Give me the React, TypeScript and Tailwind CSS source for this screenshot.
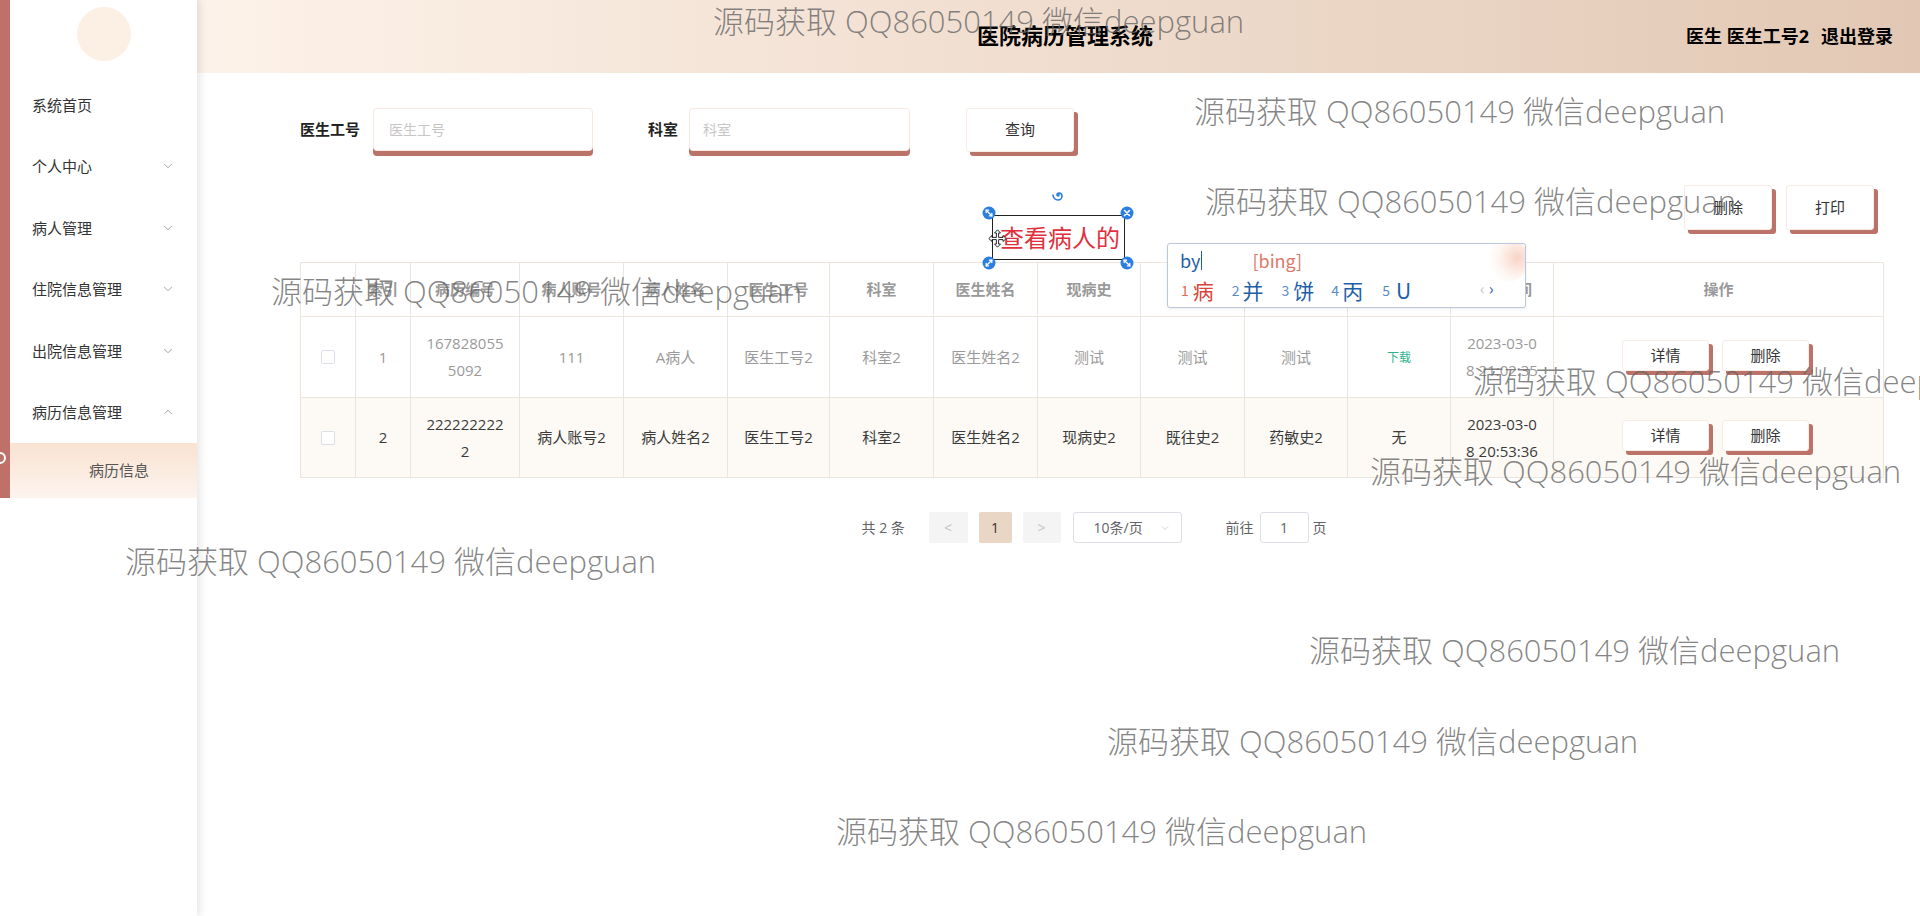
import { ChevronDown, ChevronUp } from 'lucide-react';

const menus = [
  { label: '系统首页', arrow: null },
  { label: '个人中心', arrow: 'down' },
  { label: '病人管理', arrow: 'down' },
  { label: '住院信息管理', arrow: 'down' },
  { label: '出院信息管理', arrow: 'down' },
  { label: '病历信息管理', arrow: 'up' },
];

const cols = [
  '',
  '索引',
  '病历编号',
  '病人账号',
  '病人姓名',
  '医生工号',
  '科室',
  '医生姓名',
  '现病史',
  '既往史',
  '药敏史',
  '病历文件',
  '创建时间',
  '操作',
];

const rows = [
  {
    idx: '1',
    no: ['167828055', '5092'],
    account: '111',
    name: 'A病人',
    doctorNo: '医生工号2',
    dept: '科室2',
    doctorName: '医生姓名2',
    now: '测试',
    past: '测试',
    allergy: '测试',
    file: 'download',
    time: ['2023-03-0', '8 21:02:35'],
    dim: true,
  },
  {
    idx: '2',
    no: ['222222222', '2'],
    account: '病人账号2',
    name: '病人姓名2',
    doctorNo: '医生工号2',
    dept: '科室2',
    doctorName: '医生姓名2',
    now: '现病史2',
    past: '既往史2',
    allergy: '药敏史2',
    file: '无',
    time: ['2023-03-0', '8 20:53:36'],
    dim: false,
  },
];

// watermark spots, read off the screenshot
const watermarks = [
  { left: 'left-[713px]', top: 'top-[5px]' },
  { left: 'left-[1194px]', top: 'top-[95px]' },
  { left: 'left-[1205px]', top: 'top-[185px]' },
  { left: 'left-[271px]', top: 'top-[275px]' },
  { left: 'left-[1473px]', top: 'top-[365px]' },
  { left: 'left-[1370px]', top: 'top-[455px]' },
  { left: 'left-[125px]', top: 'top-[545px]' },
  { left: 'left-[1309px]', top: 'top-[634px]' },
  { left: 'left-[1107px]', top: 'top-[725px]' },
  { left: 'left-[836px]', top: 'top-[815px]' },
];

function ShadowButton({ children, size }: { children: React.ReactNode; size: 'lg' | 'md' | 'sm' }) {
  const dims =
    size === 'lg' ? 'w-[108px] h-[44px]' : size === 'md' ? 'w-[88px] h-[45px]' : 'w-[87px] h-[31px]';
  return (
    <button
      type="button"
      className={`${dims} bg-white border border-[#f7ebe3] rounded-[3px] shadow-[4px_4px_0_#bb7268] text-[15px] text-[#333] flex items-center justify-center`}
    >
      {children}
    </button>
  );
}

function Handle({ kind }: { kind: 'diag1' | 'diag2' | 'close' }) {
  return (
    <svg width="14" height="14" viewBox="0 0 14 14">
      <circle cx="7" cy="7" r="6.5" fill="#2a7de1" />
      {kind === 'close' ? (
        <path d="M4.5 4.5 L9.5 9.5 M9.5 4.5 L4.5 9.5" stroke="#fff" strokeWidth="1.6" strokeLinecap="round" />
      ) : kind === 'diag1' ? (
        <g stroke="#fff" strokeWidth="1.3" fill="none" strokeLinecap="round">
          <path d="M4.2 4.2 L9.8 9.8" />
          <path d="M4.2 6.6 V4.2 H6.6" />
          <path d="M7.4 9.8 H9.8 V7.4" />
        </g>
      ) : (
        <g stroke="#fff" strokeWidth="1.3" fill="none" strokeLinecap="round">
          <path d="M9.8 4.2 L4.2 9.8" />
          <path d="M7.4 4.2 H9.8 V6.6" />
          <path d="M4.2 7.4 V9.8 H6.6" />
        </g>
      )}
    </svg>
  );
}

function Cell({ children, className = '' }: { children?: React.ReactNode; className?: string }) {
  return (
    <div className={`border-r border-b border-[#ebe5de] flex flex-col items-center justify-center text-center ${className}`}>
      {children}
    </div>
  );
}

export default function App() {
  return (
    <div className="relative w-[1920px] h-[916px] overflow-hidden bg-white flex font-['Open_Sans','Noto_Sans_CJK_SC',sans-serif]">
      {/* sidebar */}
      <aside className="relative z-10 w-[197px] h-full shrink-0 bg-white shadow-[3px_0_8px_rgba(0,0,0,0.10)]">
        <div className="bg-[#bf7068] pl-[10px]">
          <div className="bg-white">
            <div className="h-[74px] flex justify-center pt-[7px]">
              <div className="w-[54px] h-[54px] rounded-full bg-[#fcefe4]" />
            </div>
            {menus.map((m) => (
              <div key={m.label} className="h-[61.5px] flex items-center justify-between pl-[22px] pr-[22px] text-[15px] text-[#333]">
                <span>{m.label}</span>
                {m.arrow === 'down' && <ChevronDown size={14} strokeWidth={1.3} className="text-[#888]" />}
                {m.arrow === 'up' && <ChevronUp size={14} strokeWidth={1.3} className="text-[#888]" />}
              </div>
            ))}
            <div className="h-[55px] flex items-center pl-[79px] text-[15px] text-[#555] bg-linear-to-b from-[#f9e2d2] to-[#fdf4ee]">
              病历信息
            </div>
          </div>
        </div>
        <div className="absolute left-[-6px] top-[452px] w-[12px] h-[12px] rounded-full border-2 border-white" />
      </aside>

      {/* main */}
      <main className="flex-1 flex flex-col min-w-0">
        <header className="h-[73px] shrink-0 relative flex items-center bg-linear-to-r from-[#fdf2e9] to-[#e2c8b4]">
          <div className="flex-1 flex justify-center pl-[13px] -mt-[3px]">
            <span className="text-[22px] font-bold text-black">医院病历管理系统</span>
          </div>
          <div className="absolute right-[27px] top-[27px] flex items-center gap-[12px] text-[18px] font-bold text-black leading-none">
            <span>医生 医生工号2</span>
            <span>退出登录</span>
          </div>
        </header>

        {/* search */}
        <div className="mt-[35px] pl-[103px] flex items-center h-[43px]">
          <span className="text-[15px] font-bold text-[#222]">医生工号</span>
          <div className="ml-[13px] w-[220px] h-[43px] bg-white border border-[#f7e9e0] rounded-[4px] shadow-[0_5px_0_#bb7268] flex items-center pl-[15px] text-[14px] text-[#c6c6c6]">
            医生工号
          </div>
          <span className="ml-[55px] text-[15px] font-bold text-[#222]">科室</span>
          <div className="ml-[11px] w-[221px] h-[43px] bg-white border border-[#f7e9e0] rounded-[4px] shadow-[0_5px_0_#bb7268] flex items-center pl-[13px] text-[14px] text-[#c6c6c6]">
            科室
          </div>
          <div className="ml-[56px]">
            <ShadowButton size="lg">查询</ShadowButton>
          </div>
        </div>

        {/* actions */}
        <div className="mt-[34px] flex justify-end gap-[14px] pr-[46px]">
          <ShadowButton size="md">删除</ShadowButton>
          <ShadowButton size="md">打印</ShadowButton>
        </div>

        {/* table */}
        <div className="mt-[32px] ml-[103px] w-[1584px]">
          <div className="grid grid-cols-[55px_55px_109px_104px_104px_102px_104px_104px_103px_104px_103px_103px_103px_330px] border-l border-t border-[#ebe5de]">
            {cols.map((c, i) => (
              <Cell key={i} className="h-[54px] text-[15px] font-semibold text-[#999]">
                {c}
              </Cell>
            ))}
            {rows.map((r) => {
              const tone = r.dim ? 'text-[#9a9a9a]' : 'text-[#3a3a3a]';
              const bg = r.dim ? 'bg-white' : 'bg-[#fdfaf5]';
              const h = r.dim ? 'h-[81px]' : 'h-[80px]';
              const base = `${h} ${bg} ${tone} text-[15px] leading-[27px]`;
              return [
                <Cell key={r.idx + 'c'} className={base}>
                  <span className="w-[14px] h-[14px] border border-[#dcdfe6] rounded-[2px] bg-white" />
                </Cell>,
                <Cell key={r.idx + 'i'} className={base}>{r.idx}</Cell>,
                <Cell key={r.idx + 'n'} className={base}>
                  <span>{r.no[0]}</span>
                  <span>{r.no[1]}</span>
                </Cell>,
                <Cell key={r.idx + 'a'} className={base}>{r.account}</Cell>,
                <Cell key={r.idx + 'm'} className={base}>{r.name}</Cell>,
                <Cell key={r.idx + 'd'} className={base}>{r.doctorNo}</Cell>,
                <Cell key={r.idx + 'k'} className={base}>{r.dept}</Cell>,
                <Cell key={r.idx + 'y'} className={base}>{r.doctorName}</Cell>,
                <Cell key={r.idx + 'x'} className={base}>{r.now}</Cell>,
                <Cell key={r.idx + 'p'} className={base}>{r.past}</Cell>,
                <Cell key={r.idx + 'g'} className={base}>{r.allergy}</Cell>,
                <Cell key={r.idx + 'f'} className={base}>
                  {r.file === 'download' ? <span className="text-[12px] text-[#2fb38b]">下载</span> : r.file}
                </Cell>,
                <Cell key={r.idx + 't'} className={base}>
                  <span>{r.time[0]}</span>
                  <span>{r.time[1]}</span>
                </Cell>,
                <Cell key={r.idx + 'o'} className={base}>
                  <div className="flex gap-[13px] pr-[6px] -mt-[4px]">
                    <ShadowButton size="sm">详情</ShadowButton>
                    <ShadowButton size="sm">删除</ShadowButton>
                  </div>
                </Cell>,
              ];
            })}
          </div>

          {/* pagination */}
          <div className="mt-[34px] h-[31px] flex items-center justify-center text-[14px] text-[#606266] pl-[4px]">
            <span className="w-[50px] whitespace-nowrap">共 2 条</span>
            <span className="ml-[17px] w-[39px] h-[31px] bg-[#f4f4f5] rounded-[2px] flex items-center justify-center text-[#c0c4cc]">&lt;</span>
            <span className="ml-[11px] w-[33px] h-[31px] bg-[#ead6c5] rounded-[2px] flex items-center justify-center text-[#333]">1</span>
            <span className="ml-[11px] w-[38px] h-[31px] bg-[#f4f4f5] rounded-[2px] flex items-center justify-center text-[#c0c4cc]">&gt;</span>
            <span className="ml-[12px] w-[109px] h-[31px] border border-[#dcdfe6] rounded-[3px] flex items-center pl-[20px] pr-[10px] justify-between">
              <span>10条/页</span>
              <ChevronDown size={12} strokeWidth={1.4} className="text-[#c0c4cc]" />
            </span>
            <span className="ml-[44px]">前往</span>
            <span className="ml-[6px] w-[49px] h-[31px] border border-[#dcdfe6] rounded-[3px] flex items-center justify-center">1</span>
            <span className="ml-[4px]">页</span>
          </div>
        </div>
      </main>

      {/* screenshot-tool text box left on the page */}
      <div className="absolute left-[992px] top-[215px] w-[133px] h-[45px] border border-[#222] flex items-center pl-[7px] z-20">
        <span className="text-[24px] text-[#e0303b] leading-none whitespace-nowrap">查看病人的</span>
      </div>
      <div className="absolute left-[982px] top-[206px] z-30"><Handle kind="diag1" /></div>
      <div className="absolute left-[1120px] top-[206px] z-30"><Handle kind="close" /></div>
      <div className="absolute left-[982px] top-[256px] z-30"><Handle kind="diag2" /></div>
      <div className="absolute left-[1120px] top-[256px] z-30"><Handle kind="diag1" /></div>
      <svg className="absolute left-[1052px] top-[189px] z-30" width="12" height="12" viewBox="0 0 12 12">
        <path d="M6 6 m0 -1 a1 1 0 1 1 -1 1 a2 2 0 0 1 2 -2 a3 3 0 0 1 3 3 a4 4 0 0 1 -4 4 a5 5 0 0 1 -5 -5" stroke="#2a7de1" strokeWidth="1.6" fill="none" strokeLinecap="round" />
      </svg>
      <svg className="absolute left-[988px] top-[229px] z-30" width="19" height="19" viewBox="0 0 19 19">
        <path
          d="M9.5 0.8 L12.5 4 H10.6 V8.4 H15 V6.5 L18.2 9.5 L15 12.5 V10.6 H10.6 V15 H12.5 L9.5 18.2 L6.5 15 H8.4 V10.6 H4 V12.5 L0.8 9.5 L4 6.5 V8.4 H8.4 V4 H6.5 Z"
          fill="#fff"
          stroke="#111"
          strokeWidth="0.9"
          strokeLinejoin="round"
        />
      </svg>

      {/* IME candidate popup */}
      <div className="absolute left-[1167px] top-[243px] w-[359px] h-[65px] bg-white border border-[#b9c8da] rounded-[3px] shadow-[0_1px_3px_rgba(0,0,0,0.08)] z-30 overflow-hidden font-['Noto_Sans_CJK_SC','Open_Sans',sans-serif]">
        <div className="absolute right-[-4px] top-[-6px] w-[46px] h-[44px] rounded-full bg-[radial-gradient(circle_at_75%_45%,rgba(238,160,130,0.45),rgba(250,215,200,0.25)_45%,rgba(255,255,255,0)_70%)]" />
        <div className="absolute left-[12px] top-[3px] flex items-center h-[26px] text-[18px] leading-none">
          <span className="text-[#1f5fa6]">by</span>
          <span className="w-[1px] h-[19px] bg-[#1f5fa6] ml-[1px]" />
          <span className="ml-[50px] text-[#e07868]">[bing]</span>
        </div>
        <div className="absolute left-[13px] top-[33px] h-[26px] flex items-center leading-none">
          <span className="text-[14px] text-[#e0685a]">1</span>
          <span className="ml-[4px] text-[21px] text-[#d9453a]">病</span>
          <span className="ml-[18px] text-[14px] text-[#5a8cc4]">2</span>
          <span className="ml-[3px] text-[21px] text-[#1f5fa6]">并</span>
          <span className="ml-[18px] text-[14px] text-[#5a8cc4]">3</span>
          <span className="ml-[4px] text-[21px] text-[#1f5fa6]">饼</span>
          <span className="ml-[17px] text-[14px] text-[#5a8cc4]">4</span>
          <span className="ml-[3px] text-[21px] text-[#1f5fa6]">丙</span>
          <span className="ml-[19px] text-[14px] text-[#5a8cc4]">5</span>
          <span className="ml-[6px] text-[21px] text-[#1f5fa6]">U</span>
        </div>
        <div className="absolute left-[312px] top-[36px] flex items-center gap-[4px] text-[16px] leading-none">
          <span className="text-[#c8c8c8]">‹</span>
          <span className="text-[#1f5fa6]">›</span>
        </div>
      </div>

      {/* watermarks */}
      {watermarks.map((w, i) => (
        <div
          key={i}
          className={`absolute ${w.left} ${w.top} z-40 pointer-events-none whitespace-nowrap text-[31px] leading-[32px] font-light text-[rgba(100,100,100,0.78)]`}
        >
          源码获取 QQ86050149 微信deepguan
        </div>
      ))}
    </div>
  );
}
